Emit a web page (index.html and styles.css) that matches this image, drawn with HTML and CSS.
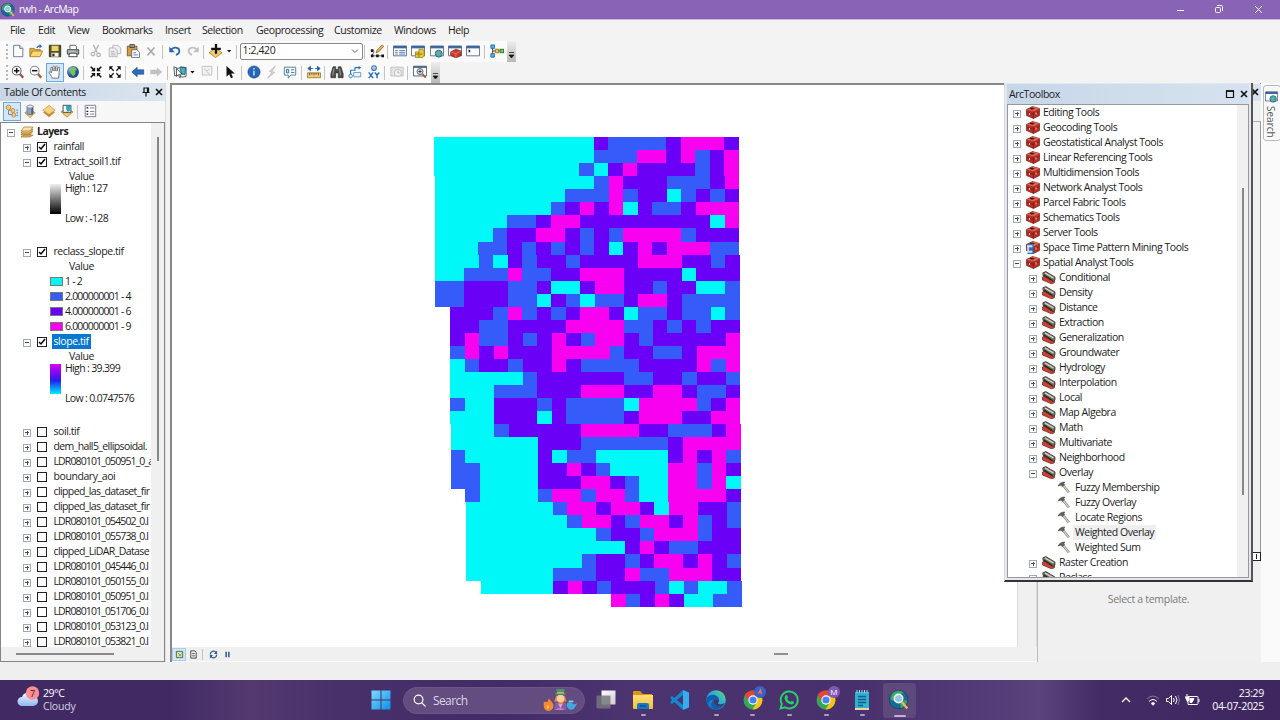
FILE: index.html
```html
<!DOCTYPE html>
<html lang="en">
<head>
<meta charset="utf-8">
<title>rwh - ArcMap</title>
<link rel="stylesheet" href="styles.css">
</head>
<body>
<svg class="defs" aria-hidden="true">
  <defs>
    <linearGradient id="gWin" x1="0" y1="0" x2="1" y2="1"><stop offset="0" stop-color="#7ddcff"/><stop offset="1" stop-color="#0a8fe8"/></linearGradient>
    <linearGradient id="gEdge" x1="0" y1="1" x2="1" y2="0"><stop offset="0" stop-color="#0c59a4"/><stop offset=".5" stop-color="#2aa5e0"/><stop offset="1" stop-color="#5fe070"/></linearGradient>
    <linearGradient id="gFold" x1="0" y1="0" x2="0" y2="1"><stop offset="0" stop-color="#ffe07a"/><stop offset="1" stop-color="#f8bd2c"/></linearGradient>
    <linearGradient id="gCloud" x1="0" y1="0" x2="0" y2="1"><stop offset="0" stop-color="#eef5ff"/><stop offset="1" stop-color="#8fb8f0"/></linearGradient>
    <linearGradient id="gTask" x1="0" y1="0" x2="1" y2="1"><stop offset="0" stop-color="#fff"/><stop offset="1" stop-color="#cfccd4"/></linearGradient>
    <radialGradient id="gGlobe" cx=".35" cy=".3"><stop offset="0" stop-color="#8fc8f5"/><stop offset="1" stop-color="#1c4f94"/></radialGradient>
  </defs>
  <symbol id="new" viewBox="0 0 16 16"><path d="M3 1.500h7l3.500 3.500v9.500H3z" fill="#fff" stroke="#5b6f8c"/><path d="M10 1.500V5h3.500" fill="#dfe8f2" stroke="#5b6f8c"/></symbol>
  <symbol id="open" viewBox="0 0 16 16"><path d="M1 14V5h5l1.500 1.500H13V9" fill="#e3b14a" stroke="#9b7423"/><path d="M1 14.500 4 8h11.500l-3 6.500z" fill="#fbd876" stroke="#a67f2c"/><path d="M9 4.500c1-2 2.500-2.500 4-2.300" fill="none" stroke="#2e6ab5" stroke-width="1.500"/><path d="m12 0 3 2.500L12 5z" fill="#2e6ab5"/></symbol>
  <symbol id="save" viewBox="0 0 16 16"><path d="M1.500 1.500h13v13h-13z" fill="#57501f" stroke="#302c14"/><path d="M4 2h8v6H4z" fill="#e9d66a"/><path d="M4 10h8v4.500H4z" fill="#f4f4f4"/><path d="M5 11h2.500v3H5z" fill="#333"/></symbol>
  <symbol id="print" viewBox="0 0 16 16"><path d="M4.500 6V1.500h6L12 3v3" fill="#fff" stroke="#555"/><path d="M1.500 6.500h13v5h-13z" fill="#b8bcc2" stroke="#333"/><path d="M4 10.500h8l.8 4H3.200z" fill="#fff" stroke="#333"/><path d="M11 8h2" stroke="#287a3a"/></symbol>
  <symbol id="cut" viewBox="0 0 16 16" fill="none" stroke="#b5b5b5" stroke-width="1.500"><path d="m5 1 4.500 9M11 1 6 10"/><circle cx="4.500" cy="11.500" r="2"/><circle cx="11" cy="12.500" r="2"/></symbol>
  <symbol id="copy" viewBox="0 0 16 16" fill="#eee" stroke="#b3b3b3"><path d="M5.500 1.500h6l3 3V11h-9z"/><path d="M1.500 4.500h6l3 3v7h-9zM3.500 8.500h4m-4 2h5m-5 2h5"/></symbol>
  <symbol id="paste" viewBox="0 0 16 16"><path d="M1.500 2.500h11v11h-11z" fill="#d99b3c" stroke="#7f551c"/><path d="M4.500.5h5V4h-5z" fill="#999" stroke="#444"/><path d="M6.500 6.500h6l3 3v6h-9z" fill="#fff" stroke="#4a6a98"/><path d="M8.500 10h3m-3 2.500h5" stroke="#4a6a98"/></symbol>
  <symbol id="del" viewBox="0 0 16 16"><path d="m4 4 8 9M12 4l-8 9" stroke="#a9a9a9" stroke-width="1.800"/></symbol>
  <symbol id="undo" viewBox="0 0 16 16"><path d="M4 6c4-3.500 9-1.500 9 2 0 2.500-2 4-4 4.500" fill="none" stroke="#2764ad" stroke-width="2"/><path d="M1.500 3v6.500H8z" fill="#2764ad"/></symbol>
  <symbol id="redo" viewBox="0 0 16 16"><path d="M12 6C8 2.500 3 4.500 3 8c0 2.500 2 4 4 4.500" fill="none" stroke="#c0c0c0" stroke-width="2"/><path d="M14.500 3v6.500H8z" fill="#c0c0c0"/></symbol>
  <symbol id="add" viewBox="0 0 16 16"><path d="m0 10 7.500-5L15 10l-7.500 5.500z" fill="#f5ca6c" stroke="#ad8436"/><path d="M8 0v11M2.500 5.500h11" stroke="#111" stroke-width="2.600"/></symbol>
  <symbol id="edit" viewBox="0 0 16 16"><path d="M2 13.500h12M2 13.500l3-5" stroke="#555"/><path d="M1 12h3v3H1zM7 12h3v3H7zM13 12h3v3h-3zM1 6h3v3H1z" fill="#111"/><path d="m7 10 1-3 6-6 1.800 1.700-6 6.300z" fill="#e7b14b" stroke="#825b20" stroke-width=".8"/></symbol>
  <symbol id="frame" viewBox="0 0 16 16"><path d="M.5 2.500h15v11H.5z" fill="#fff" stroke="#53647e"/><path d="M.5 2h15v3H.5z" fill="#3f679d"/></symbol>
  <symbol id="table" viewBox="0 0 16 16"><use href="#frame"/><path d="M2.500 7.500h3m-3 2h3m-3 2h3m1.500-4h7m-7 2h7m-7 2h7" stroke="#3b78bf"/></symbol>
  <symbol id="catalog" viewBox="0 0 16 16"><use href="#frame"/><path d="M5 9h4V6h4l2 1v7l-2 1.500H5z" fill="#e9cb30" stroke="#88751a" stroke-width=".8"/><path d="M9 9v6M5 11.500h8" stroke="#88751a"/></symbol>
  <symbol id="searchw" viewBox="0 0 16 16"><use href="#frame"/><circle cx="10" cy="11" r="4" fill="#4ba0d8" stroke="#2a6d66"/><path d="M8 10c2-3 4-1 3 1l-1 3z" fill="#71bd55"/></symbol>
  <symbol id="toolw" viewBox="0 0 16 16"><use href="#frame"/><path d="m3 9 6-3 6 2v5l-6 3-6-3z" fill="#c53a2d" stroke="#832017" stroke-width=".8"/><path d="m3 9 6 2 6-3M9 11v5" stroke="#ec8a7c" fill="none" stroke-width=".8"/></symbol>
  <symbol id="pyw" viewBox="0 0 16 16"><use href="#frame"/><path d="m3 6 2.500 2L3 10" fill="#111"/></symbol>
  <symbol id="model" viewBox="0 0 16 16"><path d="M3 3v10M3 8h10" stroke="#333" fill="none"/><path d="M1 1h4v4H1zM1 11h4v4H1z" fill="#5bb1ec" stroke="#1b65a8"/><path d="M6 6h4v4H6z" fill="#f1c945" stroke="#8b6b16"/><rect x="11.500" y="6" width="4" height="4" fill="#7cc55c" stroke="#357627"/></symbol>
  <symbol id="zin" viewBox="0 0 16 16"><path d="m10 10 4 4.500" stroke="#9c5a3a" stroke-width="2.600"/><circle cx="6.500" cy="6.500" r="5" fill="#f7fbff" stroke="#666" stroke-width="1.200"/><path d="M6.500 3.500v6m-3-3h6" stroke="#111" stroke-width="1.700"/></symbol>
  <symbol id="zout" viewBox="0 0 16 16"><path d="m10 10 4 4.500" stroke="#9c5a3a" stroke-width="2.600"/><circle cx="6.500" cy="6.500" r="5" fill="#f7fbff" stroke="#888" stroke-width="1.200"/><path d="M3.500 6.500h6" stroke="#111" stroke-width="1.700"/></symbol>
  <symbol id="pan" viewBox="0 0 16 16"><path d="M5 15C3.500 12 2 10 1 8.500c1-1.500 2.200-.5 3 .5L3 3.500C3.500 2 4.800 2.500 5 4l.8 3L5.500 2C6.500.5 7.500 1.500 7.800 3L8 7l.5-5c1-1.500 2-.5 2 .8L10.300 7l1.200-4c1-1 2-.3 1.700 1L12 15z" fill="#fff" stroke="#555" stroke-width=".9"/></symbol>
  <symbol id="globe" viewBox="0 0 16 16"><circle cx="8" cy="8" r="6.800" fill="url(#gGlobe)"/><path d="M5 3c4-2 8 1 7 3-2 0-2 2-1 4l-3 3c-1-2-3-3-3-5z" fill="#7bbf55"/></symbol>
  <symbol id="fin" viewBox="0 0 16 16"><path d="m2 2 3 3M14 2l-3 3M2 14l3-3m9 3-3-3" stroke="#111" stroke-width="1.700"/><path d="M7 2.500V7H2.500zM9 2.500V7h4.500zM7 13.500V9H2.500zM9 13.500V9h4.500z" fill="#111"/></symbol>
  <symbol id="fout" viewBox="0 0 16 16"><path d="m3 3 3.500 3.500M13 3 9.500 6.500M3 13l3.500-3.500M13 13 9.500 9.500" stroke="#111" stroke-width="1.500"/><path d="M1.500 6V1.500H6zM10 1.500h4.500V6zM1.500 10v4.500H6zM14.500 10v4.500H10z" fill="#111"/></symbol>
  <symbol id="back" viewBox="0 0 16 16"><path d="m1 8 6-5.500v3h7.500v5H7v3z" fill="#2d6dc0" stroke="#194c95" stroke-width=".7"/></symbol>
  <symbol id="fwd" viewBox="0 0 16 16"><path d="M15 8 9 2.500v3H1.500v5H9v3z" fill="#c2c2c2"/></symbol>
  <symbol id="sel" viewBox="0 0 16 16"><path d="m1 2 5 2 3-2 6 1v10l-5 1-3-3-5 1.500z" fill="#e9f6f8" stroke="#3e555f"/><path d="M8 3h6.500l-1 8-4-1z" fill="#32b8cf" stroke="#3e555f"/><path d="M4 4v9l2.200-2 1.300 3.500 1.500-.6L7.500 10.500h3z" fill="#fff" stroke="#222" stroke-width=".8"/></symbol>
  <symbol id="clr" viewBox="0 0 16 16"><path d="M2.500 1.500h11v10h-11zM5 4l6 7M11 4l-3 3" fill="#f2f2f2" stroke="#bebebe"/></symbol>
  <symbol id="arrow" viewBox="0 0 16 16"><path d="M4 1v12.500l3-2.800 2.200 4.300 2.200-1.100L9.300 9.800h4.200z" fill="#111"/></symbol>
  <symbol id="info" viewBox="0 0 16 16"><circle cx="8" cy="8" r="7" fill="#2865b8" stroke="#174783" stroke-width=".7"/><path d="M8 6.500V12M8 3.500V5" stroke="#b9dcff" stroke-width="1.800"/></symbol>
  <symbol id="bolt" viewBox="0 0 16 16"><path d="M12 1 5 7l3 1-5 7 8-6.500-3-1z" fill="#d3d3d3" stroke="#b4b4b4" stroke-width=".7"/></symbol>
  <symbol id="popup" viewBox="0 0 16 16"><path d="M1.500 2.500h13v9H9L6 15v-3.500H1.500z" fill="#fff" stroke="#447297"/><path d="M4 5h2.500v4H4zM9 5.500h4M9 8.500h4" stroke="#216bad" fill="#bfe1ff"/></symbol>
  <symbol id="ruler" viewBox="0 0 16 16"><path d="M1 4h14M1 4l3-2.500v5zM15 4l-3-2.500v5z" fill="#265fa7" stroke="#265fa7"/><path d="M8 1v6" stroke="#fff" stroke-width="2"/><path d="M.5 9h15v5.500H.5z" fill="#f2ce78" stroke="#9d7933"/><path d="M3 9v3m2.500-3v2M8 9v3m2.500-3v2M13 9v3" stroke="#684e1f"/></symbol>
  <symbol id="find" viewBox="0 0 16 16"><path d="M3.500 2h3v3h3V2h3l2.500 8v4.500h-5.500V9h-3v5.500H1V10z" fill="#4c4c4c" stroke="#222" stroke-width=".7"/><path d="M4.500 4 3 12m8-8 1 8" stroke="#aaa"/></symbol>
  <symbol id="route" viewBox="0 0 16 16"><path d="M3 12V6h5V3h6" fill="none" stroke="#2777b6" stroke-width="1.300"/><circle cx="3" cy="12.500" r="2" fill="#fff" stroke="#2777b6"/><path d="m12 .8 3 2.200-3 2.200z" fill="#2777b6"/><path d="M6.500 8.500h8v5h-8z" fill="#e9f4ff" stroke="#5c91bd"/></symbol>
  <symbol id="xy" viewBox="0 0 16 16"><circle cx="8" cy="3.500" r="2.600" fill="#fff" stroke="#2468b0" stroke-width="1.300"/><circle cx="8" cy="3.500" r=".9" fill="#2468b0"/><path d="m2 8.500 5 6.500m0-6.500L2 15m7-6.500 2.500 3 2.500-3m-2.500 3V15" stroke="#2468b0" stroke-width="1.600" fill="none"/></symbol>
  <symbol id="time" viewBox="0 0 16 16"><path d="M1 2.500h14v10H1z" fill="#e5e5e5" stroke="#bdbdbd"/><circle cx="9" cy="9" r="4" fill="#f3f3f3" stroke="#bdbdbd"/><path d="M9 6.500V9h2" stroke="#aaa" fill="none"/></symbol>
  <symbol id="mag" viewBox="0 0 16 16"><path d="M.5 1.500h15v11H.5z" fill="#fff" stroke="#44525f"/><path d="M.5 1h15v2.500H.5z" fill="#53718f"/><circle cx="8" cy="7.500" r="3.400" fill="#eef6ff" stroke="#444"/><path d="M8 5.500v4m-2-2h4" stroke="#222"/><path d="m11 10.500 3.500 4" stroke="#9c5a3a" stroke-width="2"/></symbol>
  <symbol id="pin" viewBox="0 0 10 10"><path d="M3 1h4.500v4.500H3zM1.500 5.500h7M5 5.500V9.500M6.500 1v4.500" fill="none" stroke="#111" stroke-width="1.200"/></symbol>
  <symbol id="x" viewBox="0 0 10 10"><path d="m2 2 6 6m0-6L2 8" stroke="#111" stroke-width="1.600"/></symbol>
  <symbol id="l1" viewBox="0 0 16 16"><path d="M4 5v7h5M4 7h5" fill="none" stroke="#777"/><path d="M1.500 2.500 4 1l2.500 1.500v3L4 7 1.500 5.500zM7 6l2-1 2 1v3L9 10 7 9zM8 11l2-1 2 1v3l-2 1-2-1z" fill="#f3c974" stroke="#a87e34" stroke-width=".8"/><path d="M13 7h2m-2 3h2m-2 3h2" stroke="#4c7090"/></symbol>
  <symbol id="l2" viewBox="0 0 16 16"><path d="m2 10 6-3 6 3-6 5.500z" fill="#f0c469" stroke="#a17830" stroke-width=".7"/><path d="M4.500 3v8c1 1.500 6 1.500 7 0V3z" fill="#8ea5c3" stroke="#445873" stroke-width=".7"/><path d="M9.500 4v8l2-1V3z" fill="#4c6079"/><ellipse cx="8" cy="3" rx="3.500" ry="1.800" fill="#e3ebf5" stroke="#445873" stroke-width=".7"/></symbol>
  <symbol id="l3" viewBox="0 0 16 16"><path d="m1 9.500 7-4 7 4L8 15z" fill="#c98f35"/><path d="m1 7 7-5.500L15 7l-7 5z" fill="#f8d27f" stroke="#b38739" stroke-width=".7"/></symbol>
  <symbol id="l4" viewBox="0 0 16 16"><path d="m1 9 7-4 7 4-7 6z" fill="#f0c469" stroke="#a17830" stroke-width=".7"/><path d="M3.500 1.500h9v8h-9z" fill="#fff" stroke="#223c45"/><path d="M7 2h5v5l-3 2-2-3z" fill="#29a8b6"/></symbol>
  <symbol id="l5" viewBox="0 0 16 16"><path d="M2.500 1.500h12v13h-12z" fill="#fff" stroke="#63758d"/><path d="M4 4.500h2m-2 4h2m-2 3h2" stroke="#111" stroke-width="1.500"/><path d="M8 4.500h5m-5 4h5m-5 3h5" stroke="#777"/></symbol>
  <symbol id="layers" viewBox="0 0 14 12"><path d="m1 9 3-4h9l-3 4z" fill="#e5b35a" stroke="#9c7230" stroke-width=".7"/><path d="m1 7 3-4h9l-3 4z" fill="#f1ca80" stroke="#9c7230" stroke-width=".7"/><path d="m1 5 3-4h9l-3 4z" fill="#fae3ad" stroke="#9c7230" stroke-width=".7"/><path d="m1 11 3-2h9l-3 2z" fill="#e5b35a" stroke="#9c7230" stroke-width=".7"/></symbol>
  <symbol id="box" viewBox="0 0 14 13"><path d="m.5 3.500 6-3 7 2v7l-6 3-7-3z" fill="#b92f24" stroke="#7b1a14" stroke-width=".7"/><path d="m.8 3.500 6.500 2 6-3-6.800-1.800z" fill="#de6655"/><path d="m3 2.500 3-1 3 1.200-3 1z" fill="#4c1712"/><path d="M7.300 5.500v7M.8 6.300l6.500 2.200 6-3" stroke="#7b1a14" stroke-width=".8" fill="none"/><path d="M3.500 7v2M10 6.500v2" stroke="#f3c8bf"/></symbol>
  <symbol id="boxpy" viewBox="0 0 14 13"><use href="#box"/><path d="M1 3.500h6V7H3.500v2H7v3.500H1.500" fill="#cfe7ff" stroke="#2c77c4" stroke-width="1.300"/></symbol>
  <symbol id="set" viewBox="0 0 14 13"><path d="M.5 6 3 4l9.500 4.500v3L10 13 .5 9z" fill="#cf4233" stroke="#741b14" stroke-width=".7"/><path d="m.8 1.800 3-1.300L13 6v3l-2 1.500-10-6z" fill="#77746a" stroke="#27251f" stroke-width=".7"/><path d="m3 2 8.500 5" stroke="#dedac9" stroke-width="1.300"/><path d="m2 4 8.500 5.500" stroke="#27251f" stroke-width="1.100"/></symbol>
  <symbol id="hammer" viewBox="0 0 14 14"><path d="m5.500 4 6.800 8.500" stroke="#8b867b" stroke-width="2.600"/><path d="m5.500 4 6.800 8.500" stroke="#d8d2c2" stroke-width="1.200"/><path d="M.5 5.500C1.500 3 4 .8 8 1L7 2.500l.5 1.500L5 6 3.500 4.500z" fill="#5f625f" stroke="#363936" stroke-width=".5"/></symbol>
  <symbol id="arcmap" viewBox="0 0 20 20"><circle cx="9.500" cy="9.500" r="9.300" fill="#176a94" stroke="#0d3c58" stroke-width=".6"/><path d="M3 4c3-4 9-4 12-1-3 1-5 1-6 3l-3 2c0 3-2 3-4 2-1-2-.5-4 1-6zM11 13l5-3 2 1c-.5 4-3 6-6 7z" fill="#3fa46c"/><circle cx="9.500" cy="8.500" r="4.300" fill="#a5dbea" fill-opacity=".85" stroke="#f2f5f6" stroke-width="1.400"/><path d="m12.800 12 5.500 6.500" stroke="#e5bb62" stroke-width="2.200"/></symbol>
  <symbol id="chrome" viewBox="0 0 20 20"><circle cx="10" cy="10" r="9.500" fill="#35a853"/><path d="M1.800 5A9.500 9.500 0 0 1 18.500 6H10l-4 6z" fill="#e94335"/><path d="M18.500 6A9.500 9.500 0 0 1 9.500 19.500L14 12 10 6z" fill="#fbc116"/><circle cx="10" cy="10" r="4.700" fill="#fff"/><circle cx="10" cy="10" r="3.600" fill="#4285f4"/></symbol>
</svg>

<header class="title">
  <svg class="app"><use href="#arcmap"/></svg><span class="name">rwh - ArcMap</span>
  <svg class="winbtns" viewBox="0 0 100 20" fill="none" stroke="#fff"><path d="M6 10.500h7M84 6l7 7m0-7-7 7"/><rect x="44.500" y="7.500" width="5" height="5" rx="1"/><path d="M46 5.500h4.500q1 0 1 1V11"/></svg>
</header>
<nav class="menu"><span>File</span><span>Edit</span><span>View</span><span>Bookmarks</span><span>Insert</span><span>Selection</span><span>Geoprocessing</span><span>Customize</span><span>Windows</span><span>Help</span></nav>
<div class="toolbar" id="bar1"></div>
<div class="toolbar" id="bar2"></div>

<main class="work">
  <aside class="toc">
    <div class="panehead"><span>Table Of Contents</span><svg><use href="#pin"/></svg><svg><use href="#x"/></svg></div>
    <div class="tocbar"><i class="slot on"><svg><use href="#l1"/></svg></i><i class="slot"><svg><use href="#l2"/></svg></i><i class="slot"><svg><use href="#l3"/></svg></i><i class="slot"><svg><use href="#l4"/></svg></i><i class="sep"></i><i class="slot"><svg><use href="#l5"/></svg></i></div>
    <div class="tocbody">
      <div class="tocrow"><div class="toclist" id="toc"></div><div class="vscroll"><i></i></div></div>
      <div class="hscroll"><i></i></div>
    </div>
  </aside>
  <section class="mapframe">
    <div class="maprow"><div class="map"><svg id="raster" viewBox="0 0 846 561"></svg></div><div class="mapv"></div></div>
    <div class="mapbar">
      <i class="slot on"><svg viewBox="0 0 10 10"><path d="M1.500 1.500h7v7h-7z" fill="#dbe6a0" stroke="#436348"/><path d="m3 3 4 4M4 7l3-3" stroke="#70a071"/></svg></i>
      <i class="slot"><svg viewBox="0 0 10 10"><path d="M2 1h4.500L8 2.500V9H2zM3.500 4h3m-3 2.500h3" fill="#fff" stroke="#333"/></svg></i><i class="sep"></i>
      <i class="slot"><svg viewBox="0 0 10 10"><path d="M1.500 5A3.500 3.500 0 0 1 8 3M8.500 5A3.500 3.500 0 0 1 2 7" fill="none" stroke="#345d91" stroke-width="1.400"/><path d="M9 .5v4H5.500zM1 9.500v-4h3.500z" fill="#345d91"/></svg></i>
      <i class="slot"><svg viewBox="0 0 10 10"><path d="M3.500 2v6m3-6v6" stroke="#2e5e9e" stroke-width="1.700"/></svg></i>
      <b class="thumb"></b>
    </div>
  </section>
  <section class="template"><div class="under"></div><p>Select a template.</p></section>
  <aside class="dock"><div class="searchtab"><svg><use href="#searchw"/></svg><span>Search</span></div></aside>
</main>
<div class="status"></div>

<section class="toolbox">
  <div class="panehead"><span>ArcToolbox</span><svg viewBox="0 0 10 10"><path d="M1.500 2h7v6.500h-7z" fill="none" stroke="#111" stroke-width="1.200"/><path d="M1 2h8" stroke="#111" stroke-width="1.600"/></svg><svg><use href="#x"/></svg></div>
  <div class="tools"><div id="tools"></div><div class="vscroll"><i></i></div></div>
</section>
<div class="peek"><svg><use href="#x"/></svg></div>
<div class="cursor"></div>

<footer class="taskbar">
  <div class="weather">
    <svg viewBox="0 0 26 24"><path d="M5 20a4.500 4.500 0 0 1 0-9 6 6 0 0 1 11-1 5 5 0 0 1 0 10z" fill="url(#gCloud)"/><circle cx="15.500" cy="7" r="6.700" fill="#ff8f94"/><text x="13" y="10.500">7</text></svg>
    <div><div>29°C</div><div>Cloudy</div></div>
  </div>
  <div class="apps">
    <i class="task"><svg viewBox="0 0 20 20" fill="url(#gWin)"><path d="M.5.500h9v9h-9zM10.500.500h9v9h-9zM.5 10.500h9v9h-9zM10.500 10.500h9v9h-9z"/></svg></i>
    <div class="search"><svg viewBox="0 0 14 14" fill="none" stroke="#fff" stroke-width="1.300"><circle cx="6" cy="6" r="4.700"/><path d="m9.500 9.500 4 4"/></svg><span>Search</span>
      <svg class="hatter" viewBox="0 0 36 24"><path d="M1 13q5 2 5-3 4 3 5 6 1 6-5 7-5-1-5-5z" fill="#f18a32"/><path d="M4 20q1-6 3 0z" fill="#ffd45c"/><path d="M25 15q4-2 7 1l4-1-3 5q-5 4-8-2z" fill="#42a9dc"/><path d="M27 12h5v2h-5z" fill="#70cfe8"/><path d="M13 14h11l1 8H12z" fill="#7960b5"/><path d="M16 15h5l-2.500 5z" fill="#f1a7c3"/><path d="m14 7-2 6h4l1 3h4l1-3h3l-2-6z" fill="#e78632"/><circle cx="18.500" cy="10" r="4" fill="#f5cfa5"/><path d="M13 6h11V4h-2l1-4h-9l1 4h-2z" fill="#4d9371"/><path d="M15 4h7" stroke="#d6bd50" stroke-width="1.500"/><path d="M13 22q5-5 10 0z" fill="#d873b2"/></svg></div>
    <i class="task"><svg viewBox="0 0 20 20"><path d="M5.500.500h14v14h-14z" fill="url(#gTask)"/><path d="M.5 5.500h14v13H.5z" fill="#77777c" fill-opacity=".85"/></svg></i>
    <i class="task run"><svg viewBox="0 0 20 20"><path d="M0 2q0-1 1-1h6l3 3h9v14H0z" fill="#dd9514"/><path d="M0 5h20v13q0 1-1 1H1q-1 0-1-1z" fill="url(#gFold)"/><path d="M4 15q0-2 2-2h8q2 0 2 2v4H4z" fill="#1478c8"/><path d="M7 16h6" stroke="#084d8d" stroke-width="1.300"/></svg></i>
    <i class="task"><svg viewBox="0 0 20 20"><path d="M14 0v20L1 8l2-2 11 9V5L3 14l-2-2z" fill="#1687cf"/><path d="m14 0 6 2.500v15L14 20z" fill="#36adf0"/></svg></i>
    <i class="task run"><svg viewBox="0 0 20 20"><circle cx="10" cy="10" r="9.800" fill="url(#gEdge)"/><path d="M1 8c4-6 12-3 12 2 0 2-3 2-1 4 2 1 5 0 7-1-2 5-7 7-11 6-3-2-4-6-1-9-3 0-5 2-5 5-1-2-1.500-5-1-7z" fill="#105ead"/><path d="M8 10c2-1 5 0 5 1 0 1-2 2-.5 3 2 1 5 0 6.500-1-3 4-9 4-11 0z" fill="#49345f"/></svg></i>
    <i class="task run"><svg viewBox="0 0 20 20"><use href="#chrome"/></svg><svg class="badge" viewBox="0 0 12 12"><circle cx="6" cy="6" r="6" fill="#3563c9"/><path d="m7 2 1 7-2-2-3 1z" fill="#f26e5d"/></svg></i>
    <i class="task run"><svg viewBox="0 0 20 20"><path d="M1.500 18.500 2.800 14A8.500 8.500 0 1 1 6 17.300z" fill="none" stroke="#26d366" stroke-width="1.900"/><path d="M6 6q1.500-2 2.500 0l.5 1.500L8.200 9Q9.500 11 11.500 12l1.200-1.200L15 12q0 2.500-2.500 2.500Q7 13.500 5.500 8.500z" fill="#26d366"/></svg></i>
    <i class="task run"><svg viewBox="0 0 20 20"><use href="#chrome"/></svg><span class="badge m">M</span></i>
    <i class="task run"><svg viewBox="0 0 20 20"><path d="M3 2h14v16H3z" fill="#35add0"/><path d="M3 18h14v2H3z" fill="#e9d5a0"/><path d="M5 0v3m2.500-3v3M10 0v3m2.500-3v3M15 0v3" stroke="#91e4f6"/><path d="M6 6.500h8m-8 3h8m-8 3h8m-8 3h5" stroke="#105f87" stroke-width="1.300"/></svg></i>
    <i class="task run active"><svg viewBox="0 0 20 20"><use href="#arcmap"/></svg></i>
  </div>
  <div class="tray">
    <svg viewBox="0 0 90 20" fill="none" stroke="#fff"><path d="m5 12 4-4 4 4" stroke-width="1.400"/><path d="M30 9q6-6 12 0" stroke="#8a7a9f"/><path d="M32 11.500q4-4 8 0"/><path d="M34 13.500q2-2 4 0" /><circle cx="36" cy="14" r="1" fill="#fff"/><path d="M49.500 8.500h2l3-3v9l-3-3h-2zM56.500 8q1.500 2 0 4m2-6q3 4 0 8"/><path d="M61 5q3 5 0 10" stroke="#8a7a9f"/><path d="M71 6.500h9q1 0 1 1v6q0 1-1 1h-9zM82 9v3" /><path d="M73 8.500h4l-2 4h-2z" fill="#fff"/><path d="M70 4v3M68 7h4v3l-2 2" fill="#fff"/></svg>
    <div class="clock"><div>23:29</div><div>04-07-2025</div></div>
  </div>
</footer>
<script src="app.js"></script>
</body>
</html>
```

FILE: styles.css
```css
* { box-sizing: border-box; }
body { margin: 0; width: 1280px; height: 720px; overflow: hidden; display: flex; flex-direction: column; background: #f3f3f3; color: #1c1c1c; font: 10.5px/15px "Open Sans", "Noto Sans", sans-serif; letter-spacing: -.4px; white-space: nowrap; }
i { font-style: normal; }
svg { display: block; flex: none; }
.defs { position: absolute; width: 0; height: 0; }

.title { height: 20px; flex: none; display: flex; align-items: center; background: #8863b6; color: #fff; border-bottom: 1px solid #ccb4e6; }
.app { width: 14px; height: 14px; margin: 0 4px 0 1px; }
.name { flex: 1; letter-spacing: -.5px; }
.winbtns { width: 100px; height: 20px; margin-right: 9px; }
.menu { height: 21px; flex: none; display: flex; align-items: center; padding-left: 10px; }
.menu span { flex: none; }
.menu span:nth-child(1) { width: 28px; } .menu span:nth-child(2) { width: 30px; }
.menu span:nth-child(3) { width: 34px; } .menu span:nth-child(4) { width: 63px; letter-spacing: -.55px; }
.menu span:nth-child(5) { width: 37px; } .menu span:nth-child(6) { width: 54px; }
.menu span:nth-child(7) { width: 78px; } .menu span:nth-child(8) { width: 60px; }
.menu span:nth-child(9) { width: 54px; }

.toolbar { height: 21px; flex: none; display: flex; align-items: center; align-self: flex-start; background: #fafafa; }
.grip { width: 3.500px; height: 15px; border-left: 2px dotted #b9b9b9; margin-left: 5.500px; }
.slot { width: 18.330px; height: 18.330px; flex: none; display: flex; align-items: center; justify-content: center; }
.slot svg { width: 14px; height: 14px; }
.slot.on { background: #d3e7f8; border: 1px solid #69a9dd; }
.sep { width: 5px; height: 14px; flex: none; background: linear-gradient(#c4c4c4, #c4c4c4) 1px 0 / 1px 100% no-repeat; }
.drop { width: 7px; height: 4px; flex: none; margin-right: 2px; background: #111; clip-path: polygon(1px 0, 6px 0, 3.500px 3px); }
.combo { width: 123px; height: 17px; flex: none; display: flex; align-items: center; justify-content: space-between; padding: 0 3px 2px 2px; background: #fff; border: 1px solid #888; border-radius: 2px; }
.combo svg { width: 8px; height: 8px; }
.more { align-self: stretch; width: 9px; margin-left: 1px; background: linear-gradient(#eee, #b8b8b8); display: flex; align-items: flex-end; justify-content: center; padding-bottom: 3px; }
.more svg { width: 7px; height: 7px; }

.work { height: 579px; flex: none; display: flex; }
.toc { width: 166px; height: 579px; flex: none; display: flex; flex-direction: column; border-right: 1px solid #dedede; }
.panehead { display: flex; align-items: center; background: linear-gradient(90deg, #c8d6e6, #dbe5f0); }
.toc .panehead { height: 18px; flex: none; padding: 0 1px 0 4px; letter-spacing: -.35px; }
.panehead span { flex: 1; }
.panehead svg { width: 10px; height: 10px; margin-left: 3px; }
.tocbar { height: 21px; flex: none; display: flex; align-items: center; padding-left: 3px; background: #f7f7f7; }
.tocbody { flex: 1; min-height: 0; display: flex; flex-direction: column; border: 1px solid #858585; background: #fff; }
.tocrow { flex: 1; min-height: 0; display: flex; }
.toclist { width: 150px; flex: none; overflow: hidden; padding-top: 1px; }
.vscroll { background: #f0f0f0; }
.toc .vscroll { flex: 1; padding: 14px 0 0 6px; }
.vscroll i { display: block; width: 2px; background: #868686; }
.toc .vscroll i { height: 324px; }
.hscroll { height: 14px; background: #f0f0f0; padding: 6px 0 0 15px; }
.hscroll i { display: block; width: 98px; height: 2px; background: #8a8a8a; }

.row { height: 15px; display: flex; align-items: center; }
.exp { width: 8px; height: 8px; flex: none; margin-top: 2px; border: 1px solid #a3a9b5; background: linear-gradient(#444, #444) center / 4px 1px no-repeat; }
.exp.plus { background: linear-gradient(#465070, #465070) center / 4px 1px no-repeat, linear-gradient(#465070, #465070) center / 1px 4px no-repeat; }
.toclist .lay { padding-left: 22px; }
.toclist .root { padding-left: 6px; font-weight: 700; letter-spacing: -.55px; }
.root svg { width: 14px; height: 12px; margin: 0 3px 0 5px; }
.chk { width: 10px; height: 10px; flex: none; margin: 1px 4.500px 0 6px; border: 1px solid #222; background: #fff; }
.chk svg { width: 8px; height: 8px; }
.lbl { padding: 0 2px; }
.lay .lbl { letter-spacing: -.42px; }
.lay .lbl.mid { letter-spacing: -.6px; }
.lay .lbl.num { letter-spacing: -.88px; }
.lbl.hl { background: #0877d2; color: #fff; }
.val { padding-left: 68px; }
.cls { padding-left: 49px; letter-spacing: -.8px; }
.cls i { width: 13px; height: 9px; margin-right: 2px; border: 1px solid #777; }
.ramp { height: 60px; display: flex; padding-left: 49px; letter-spacing: -.65px; }
.ramp > i { width: 11px; height: 30px; margin-right: 4px; }
.ramp.gray > i { background: linear-gradient(#eee, #000); }
.ramp.cool > i { background: linear-gradient(#d800f0, #5010f0 45%, #2020f0 55%, #00f0ff); }
.ramp div div { height: 30px; margin-top: -3px; }
.ramp div div + div { margin-top: 0; }

.mapframe { width: 867px; flex: none; display: flex; flex-direction: column; margin-left: 4px; border-left: 2px solid #888; border-top: 2px solid #888; background: #f0f0f0; }
.maprow { height: 562px; flex: none; display: flex; }
.map { width: 846px; background: #fff; border-right: 1px solid #ddd; }
.map svg { width: 846px; height: 561px; }
.mapv { flex: 1; border-right: 1px solid #ddd; }
.mapbar { flex: 1; display: flex; align-items: center; background: #f0f0f0; border-bottom: 1px solid #fafafa; }
.mapbar .slot { width: 14px; height: 13px; }
.mapbar .slot svg { width: 9px; height: 9px; }
.mapbar .slot.on { border-color: #a8cdea; }
.mapbar .sep { margin: 0 0 0 1px; height: 11px; }
.thumb { width: 14px; height: 2px; background: #909090; margin-left: 540px; }
.template { width: 224px; flex: none; border-left: 1px solid #bbb; background: #f0f0f0; color: #7b7b7b; }
.under { height: 474px; border-right: 1px solid #999; border-bottom: 1px solid #999; }
.template p { margin: 35px 0 0; padding-right: 2px; text-align: center; letter-spacing: -.3px; }
.dock { flex: 1; background: #fafafa; }
.searchtab { width: 18px; height: 56px; margin: 2px 0 0 2px; padding: 4px 2px 0 0; display: flex; flex-direction: column; align-items: center; border: 1px solid #bbb; border-radius: 3px; background: #f8f8f8; color: #555; }
.searchtab svg { width: 13px; height: 13px; }
.searchtab span { writing-mode: vertical-rl; margin-top: 3px; line-height: 14px; font-size: 10px; letter-spacing: 0; }
.status { height: 18px; flex: none; background: #efefef; }

.toolbox { position: absolute; left: 1004px; top: 83px; width: 249px; height: 499px; display: flex; flex-direction: column; padding: 1px 2px 2px 2px; background: #e2e7ee; border-right: 2px solid #555; border-bottom: 2px solid #333; border-left: 1px solid #ddd; }
.toolbox .panehead { height: 20px; flex: none; padding: 0 0 0 2px; background: linear-gradient(90deg, #c7d7e8, #d6e2ef); letter-spacing: -.45px; }
.toolbox .panehead svg { margin-left: 4px; }
.tools { flex: 1; min-height: 0; display: flex; overflow: hidden; background: #fff; border: 1px solid #999; }
#tools { width: 229px; letter-spacing: -.46px; }
.toolbox .vscroll { padding: 83px 0 0 5px; flex: 1; }
.toolbox .vscroll i { height: 307px; }
.d0 { padding-left: 5px; } .d1 { padding-left: 21px; } .d2 { padding-left: 49px; }
#tools .row svg { width: 14px; height: 13px; margin: 0 1.500px 0 4.500px; }
#tools .row.d2 svg { margin: 0 2px 0 0; }
.lbl.soft { background: #efefef; }
.peek { position: absolute; left: 1253px; top: 84px; width: 8px; height: 38px; overflow: hidden; background: linear-gradient(#d6e2ef 0 17px, #f0f0f0 17px); border-bottom: 1px solid #aaa; }
.peek svg { width: 10px; height: 10px; margin: 3px 0 0 -3px; }
.cursor { position: absolute; left: 1253px; top: 552px; width: 8px; height: 9px; border: 1px solid #222; border-left: 0; background: linear-gradient(#222, #222) 3px 1px / 1px 5px no-repeat #fff; }

.taskbar { height: 40px; flex: none; display: flex; align-items: center; color: #fff; background: linear-gradient(90deg, #412a64 0, #412a64 170px, #53396f 250px, #48306b 340px, #432b67 490px, #4b3470 640px, #48306d 850px, #523b76 980px, #5b447d 1040px, #432b66 1100px, #3e275f 1280px); }
.weather { width: 371px; flex: none; display: flex; padding-left: 17px; line-height: 13px; }
.weather svg { width: 26px; height: 24px; margin-top: -1px; }
.weather text { font: 9px "Open Sans", sans-serif; fill: #222; }
.weather div div + div { color: #d8d0e2; letter-spacing: -.2px; }
.apps { display: flex; align-items: center; }
.task { position: relative; width: 36.600px; height: 36px; flex: none; display: flex; align-items: center; justify-content: center; }
.task > svg { width: 20px; height: 20px; }
.task:first-child { width: 20px; margin-right: 12px; }
.task.run::after { content: ""; position: absolute; bottom: 2px; left: 16px; width: 5px; height: 2px; border-radius: 1px; background: #aaa0b8; }
.task.active { width: 33px; height: 35px; margin-left: 2px; background: #5d497b; border-radius: 3px; }
.task.active::after { bottom: 1px; left: 11px; width: 12px; background: #c9aadd; }
.task .badge { position: absolute; left: 20px; top: 4px; width: 12px; height: 12px; }
.badge.m { border-radius: 50%; background: #8059b8; font-size: 8px; line-height: 12px; text-align: center; }
.search { width: 182px; height: 27px; margin-right: 3px; flex: none; display: flex; align-items: center; padding: 0 6px 0 9px; border-radius: 14px; background: #624c80; border: 1px solid #6b568a; font-size: 12px; color: #ddd5e6; letter-spacing: -.6px; }
.search > svg { width: 13px; height: 13px; }
.search span { flex: 1; margin-left: 7px; }
.search .hatter { width: 36px; height: 23px; }
.tray { margin-left: auto; display: flex; align-items: center; padding-right: 16px; }
.tray svg { width: 90px; height: 20px; }
.clock { text-align: right; line-height: 13px; width: 57px; letter-spacing: -.3px; }
```

FILE: app.js
```js
const icon = id => `<svg><use href="#${id}"/></svg>`;
const extras = {
  '|': '<i class="sep"></i>',
  'v': '<i class="drop"></i>',
  'combo': '<div class="combo"><span>1:2,420</span><svg viewBox="0 0 8 8"><path d="m1 2.500 3 3 3-3" fill="none" stroke="#666"/></svg></div>',
  'more': '<i class="more"><svg viewBox="0 0 7 7"><path d="M1 .5h5M1 3h5L3.500 6z" fill="#111" stroke="#111" stroke-width=".7"/></svg></i>'
};
const bar = (el, items) => {
  document.getElementById(el).innerHTML = '<i class="grip"></i>' + items.split(' ').map(k =>
    extras[k] || `<i class="slot${k === 'pan' ? ' on' : ''}">${icon(k)}</i>`).join('');
};
bar('bar1', 'new open save print | cut copy paste del | undo redo | add v | combo | edit | table catalog searchw toolw pyw | model more');
bar('bar2', 'zin zout pan globe | fin fout | back fwd | sel v clr | arrow | info bolt popup | ruler | find route xy | time | mag more');

const tick = '<svg viewBox="0 0 8 8"><path d="m1 4 2 2 4-5" fill="none" stroke="#000" stroke-width="1.500"/></svg>';
const tight = name => name.startsWith('LDR') ? ' num' : name.startsWith('dem') || name.startsWith('clipped') ? ' mid' : '';
const lay = (name, on, open, hl) => `<div class="row lay"><i class="exp${open ? '' : ' plus'}"></i><i class="chk">${on ? tick : ''}</i><span class="lbl${hl ? ' hl' : ''}${tight(name)}">${name}</span></div>`;
const val = '<div class="row val">Value</div>';
const ramp = (kind, hi, lo) => `<div class="ramp ${kind}"><i></i><div><div>High : ${hi}</div><div>Low : ${lo}</div></div></div>`;
const cls = (c, t) => `<div class="row cls"><i style="background:${c}"></i>${t}</div>`;
document.getElementById('toc').innerHTML =
  `<div class="row root"><i class="exp"></i>${icon('layers')}Layers</div>` +
  lay('rainfall', 1, 0) + lay('Extract_soil1.tif', 1, 1) + val + ramp('gray', '127', '-128') +
  lay('reclass_slope.tif', 1, 1) + val +
  cls('#00f8f8', '1 - 2') + cls('#355cf8', '2.000000001 - 4') + cls('#6a00f5', '4.000000001 - 6') + cls('#f800f0', '6.000000001 - 9') +
  lay('slope.tif', 1, 1, 1) + val + ramp('cool', '39.399', '0.0747576') +
  ['soil.tif', 'dem_hall5_ellipsoidal.', 'LDR080101_050951_0_a', 'boundary_aoi', 'clipped_las_dataset_fir', 'clipped_las_dataset_fir',
   'LDR080101_054502_0.l', 'LDR080101_055738_0.l', 'clipped_LiDAR_Datase', 'LDR080101_045446_0.l', 'LDR080101_050155_0.l',
   'LDR080101_050951_0.l', 'LDR080101_051706_0.l', 'LDR080101_053123_0.l', 'LDR080101_053821_0.l'].map(n => lay(n, 0, 0)).join('');

const tool = (depth, ic, name, open) => `<div class="row d${depth}">${depth < 2 ? `<i class="exp${open ? '' : ' plus'}"></i>` : ''}${icon(ic)}<span class="lbl${name === 'Weighted Overlay' ? ' soft' : ''}">${name}</span></div>`;
document.getElementById('tools').innerHTML =
  ['Editing', 'Geocoding', 'Geostatistical Analyst', 'Linear Referencing', 'Multidimension', 'Network Analyst', 'Parcel Fabric', 'Schematics', 'Server'].map(n => tool(0, 'box', n + ' Tools')).join('') +
  tool(0, 'boxpy', 'Space Time Pattern Mining Tools') + tool(0, 'box', 'Spatial Analyst Tools', 1) +
  ['Conditional', 'Density', 'Distance', 'Extraction', 'Generalization', 'Groundwater', 'Hydrology', 'Interpolation', 'Local', 'Map Algebra', 'Math', 'Multivariate', 'Neighborhood'].map(n => tool(1, 'set', n)).join('') +
  tool(1, 'set', 'Overlay', 1) +
  ['Fuzzy Membership', 'Fuzzy Overlay', 'Locate Regions', 'Weighted Overlay', 'Weighted Sum'].map(n => tool(2, 'hammer', n)).join('') +
  tool(1, 'set', 'Raster Creation') + tool(1, 'set', 'Reclass');

// Reclassified slope raster: one letter per cell, C/B/P/M are the four classes.
const grid = [
  'CCCCCCCCCCCPBBBBPMMMP', 'CCCCCCCCCCCBBBMMPMBPM', 'CCCCCCCCCCBCPMPPPPBPM', 'CCCCCCCCCCCBMPPPBBBPM',
  'CCCCCCCCCBBBMBPPCBPBP', 'CCCCCCCCBPMPMCPBBPMMM', 'CCCCCBBPMMPPPPPPPPPCM', 'CCCCBPPMMPBPBMMMMBPPP',
  'CCCBBPBPBPBPCPMPMMMBB', 'CCCBCPBPPBPPPPMMMPPBP', 'CCBBBMBBPPMMMPPPPCPPP', 'BBPPPBBPCCPMMPPBPPCCB',
  'BBPPPBBCPBCBBPMMPBBBB', '.PPPBMBPBPMMPCBBPBBCB', '.PPBBPPPPMMMMBBPBPBPP', '.PMBBPBPMPBMMPBPPPPPM',
  '.BMPMPPPMMMMBPPBBPMMM', '.CBPPBPPMPBBBBPPPPMBM', '.CCCCCBPPPPPPBBPPBPPB', '.CCCBBBPPPMMMPPMMPBBP',
  '.BCCPPPBPBBBBCMMMMBPM', '.CCCPPPCPBBBBPMMMPPMM', '.CCCBPPPPPMMMMPPBBBPM', '.CCCCCCPPPBBBBBBPMMMM',
  '.BCCCCCPCBBCCCCCPMPMB', '.BBCCCCPPMPBCCCCMMBMP', '.BBCCCCPPPMMPBCCMMBMC', '..BCCCCBMMBMMBCCMMMMP',
  '..CCCCCCBMMPMMPCMMPPB', '..CCCCCCCBMMPBMMPMBPB', '..CCCCCCCCCBPPBMMMBPP', '..CCCCCCCCCCCPMPBBPPP',
  '..CCCCCCCCBPPBPMMPMPB', '..CCCCCCBBBPPMBBMMMPP', '...CCCCCPMPBPPPBCBCCB', '............MBPMPCCBB'
];
const fill = { C: '#00f8f8', B: '#355cf8', P: '#6a00f5', M: '#f800f0' };
const X0 = 262.3, Y0 = 52.2, W = 14.5, H = 13.04;
let out = '';
grid.forEach((line, r) => {
  for (let c = 0; c < line.length;) {
    let e = c;
    while (line[e] === line[c]) e++;
    if (fill[line[c]]) {
      const x = Math.round(X0 + r * .08 + c * W), x2 = Math.round(X0 + r * .08 + e * W);
      const y = Math.round(Y0 + r * H), y2 = Math.round(Y0 + (r + 1) * H);
      out += `<rect x="${x}" y="${y}" width="${x2 - x}" height="${y2 - y}" fill="${fill[line[c]]}"/>`;
    }
    c = e;
  }
});
document.getElementById('raster').innerHTML = out;
```
